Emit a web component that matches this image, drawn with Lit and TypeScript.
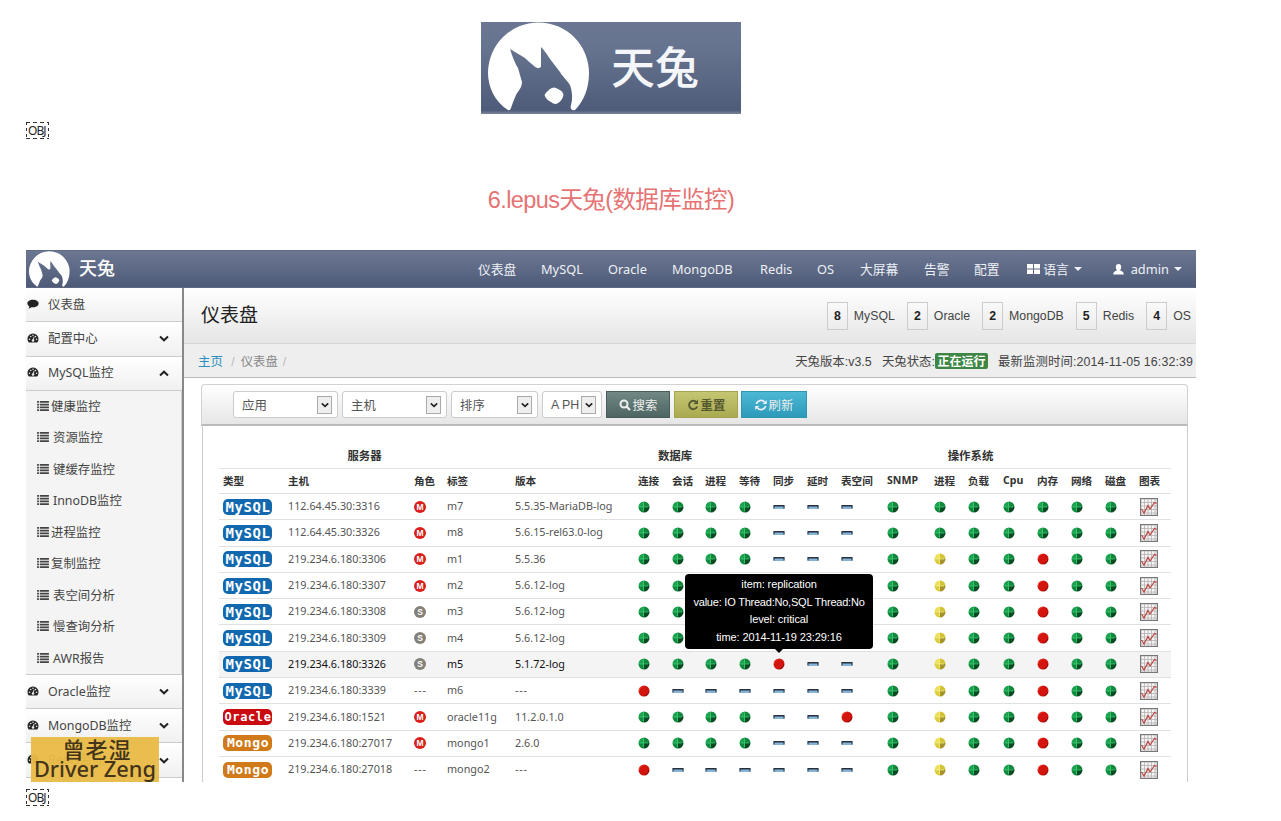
import { LitElement, html, css, svg } from "lit";
import { customElement } from "lit/decorators.js";

const rabbit = html`<svg class="rabbit" viewBox="0 0 116 92">
  <path fill="#fff" d="M27 88C14 80 7 65 7 51A50.5 50.5 0 0 1 108 51C108 66 103 79 94 88C90 89 89 86 90 83C92 76 91 69 89 63C86 58 81 54 79 50L69 37Q64 29 60 25L60 45Q56 48 52 43Q48 40 44 36L29 27Q33 40 37 46L41 60C41 66 37 69 35 73C33 78 32 80 30 86Q29 89 27 88Z"/>
  <path fill="#fff" d="M63.500 73Q65 70 69 67Q73 64 77 67Q82 69 82.500 73Q81 79 77 81Q74 83.500 70 80Q65 78 63.500 73Z"/>
</svg>`;

const gauge = html`<svg class="gauge" viewBox="0 0 14 12">
  <path fill="#262626" d="M1 10A6.6 6.6 0 1 1 13 10Q12.5 11.500 11.500 11.500H2.500Q1.500 11.500 1 10Z"/>
  <g fill="#eee"><circle cx="2.800" cy="7.500" r=".9"/><circle cx="4.300" cy="4.200" r=".9"/><circle cx="7" cy="2.800" r=".9"/><circle cx="10" cy="4.200" r=".9"/><circle cx="11.300" cy="7.500" r=".9"/></g>
  <path stroke="#eee" stroke-width="1.100" d="M7 9L8.300 4.500"/><circle cx="7" cy="9" r="1.500" fill="#eee"/>
</svg>`;

const comment = html`<svg class="gauge" viewBox="0 0 14 12"><path fill="#222" d="M7 1C11 1 13.800 3 13.800 5.500S11 10 7 10Q6 10 5 9.800Q3.500 11.300 1.600 11.400Q2.700 10.200 2.600 8.900Q.2 7.600 .2 5.500C.2 3 3 1 7 1Z"/></svg>`;

const listIcon = html`<svg class="list-icon" viewBox="0 0 13 11"><path fill="#444" d="M0 0h2v2H0zM3 0h10v2H3zM0 3h2v2H0zM3 3h10v2H3zM0 6h2v2H0zM3 6h10v2H3zM0 9h2v2H0zM3 9h10v2H3z"/></svg>`;

const chevron = (up: boolean) => html`<svg class="chev" viewBox="0 0 10 7"><path d=${up ? "M1 5.500L5 1.700L9 5.500" : "M1 1.500L5 5.300L9 1.500"} fill="none" stroke="#222" stroke-width="2"/></svg>`;

const chart = html`<svg class="chart" viewBox="0 0 18 18">
  <rect x=".6" y=".6" width="16.800" height="16.800" fill="#f6f3f3" stroke="#777" stroke-width="1.200"/>
  <path d="M4.500 1v16M8 1v16M11.500 1v16M15 1v16M1 4.500h16M1 8h16M1 11.500h16M1 15h16" stroke="#b5b0b2" stroke-width=".8"/>
  <path d="M1.500 11L4 15L8 7.500L10 11L14.500 4.500L16.500 5.500" fill="none" stroke="#b8453f" stroke-width="1.200"/>
</svg>`;

const palette: Record<string, string[]> = {
  g: ["#1da350", "#14873f", "#0f8a3c", "#0a4a22", "#43d67c"],
  y: ["#ece05a", "#d3c235", "#dccd3c", "#a3932a", "#f6ef8e"],
  r: ["#ea3a2c", "#d0140e", "#d0140e", "#9a0c08", ""],
};

function mark(kind: string) {
  if (kind === "-") {
    return html`<svg class="mark" viewBox="0 0 12 12"><path fill="#86b3d6" d="M.5 4h11v4H.5z"/><path fill="#26333f" d="M.5 4h11v1.400H.5zM.5 4h1v3.500h-1zM10.500 4h1v3.500h-1z"/></svg>`;
  }
  const [a, b, c, d, shine] = palette[kind];
  return html`<svg class="mark" viewBox="0 0 12 12">
    <path fill=${a} d="M6 6V.5A5.500 5.500 0 0 0 .5 6z"/>
    <path fill=${b} d="M6 6V.5A5.500 5.500 0 0 1 11.500 6z"/>
    <path fill=${c} d="M6 6V11.500A5.500 5.500 0 0 1 .5 6z"/>
    <path fill=${d} d="M6 6V11.500A5.500 5.500 0 0 0 11.500 6z"/>
    ${kind === "r" ? svg`<circle cx="6" cy="6" r="4.400" fill="#d4140f"/>` : svg`<path d="M5.500 1.500V10M1.500 6H10" stroke=${shine} stroke-width="1" opacity=".7"/>`}
  </svg>`;
}

type Row = [string, string, string, string, string, string];
const rows: Row[] = [
  ["MySQL", "112.64.45.30:3316", "M", "m7", "5.5.35-MariaDB-log", "gggg---ggggggg"],
  ["MySQL", "112.64.45.30:3326", "M", "m8", "5.6.15-rel63.0-log", "gggg---ggggggg"],
  ["MySQL", "219.234.6.180:3306", "M", "m1", "5.5.36", "gggg---gyggrgg"],
  ["MySQL", "219.234.6.180:3307", "M", "m2", "5.6.12-log", "gggg---gyggrgg"],
  ["MySQL", "219.234.6.180:3308", "S", "m3", "5.6.12-log", "gggg---gyggrgg"],
  ["MySQL", "219.234.6.180:3309", "S", "m4", "5.6.12-log", "gggg---gyggrgg"],
  ["MySQL", "219.234.6.180:3326", "S", "m5", "5.1.72-log", "ggggr--gyggrgg"],
  ["MySQL", "219.234.6.180:3339", "---", "m6", "---", "r------gyggrgg"],
  ["Oracle", "219.234.6.180:1521", "M", "oracle11g", "11.2.0.1.0", "gggg--rgyggrgg"],
  ["Mongo", "219.234.6.180:27017", "M", "mongo1", "2.6.0", "gggg---gyggrgg"],
  ["Mongo", "219.234.6.180:27018", "---", "mongo2", "---", "r------gyggrgg"],
];
const heads = ["类型", "主机", "角色", "标签", "版本", "连接", "会话", "进程", "等待", "同步", "延时", "表空间", "SNMP", "进程", "负载", "Cpu", "内存", "网络", "磁盘", "图表"];
const subs = ["健康监控", "资源监控", "键缓存监控", "InnoDB监控", "进程监控", "复制监控", "表空间分析", "慢查询分析", "AWR报告"];
const stats = [["8", "MySQL"], ["2", "Oracle"], ["2", "MongoDB"], ["5", "Redis"], ["4", "OS"]];

@customElement("app-root")
export class AppRoot extends LitElement {
  static styles = css`
    :host { display: block; width: 1281px; height: 821px; overflow: hidden; background: #fff; font-family: "Noto Sans", "Noto Sans CJK SC", sans-serif; color: #444; white-space: nowrap; }
    * { box-sizing: border-box; }
    svg { display: block; flex: none; }
    .page { padding: 22px 0 0 26px; width: 1196px; }
    .banner { width: 260px; height: 92px; margin-left: 455px; display: flex; background: linear-gradient(#6b7792, #66738f 30%, #4f5c79 96%, #7c869c); }
    .banner .rabbit { width: 116px; height: 92px; }
    .banner .name { font: 500 44px/86px "Noto Sans CJK SC", sans-serif; color: #f4f6fa; margin-left: 14px; height: 92px; }
    .obj { width: 23px; height: 17px; font: 12px/17px "Noto Sans", sans-serif; letter-spacing: -.9px; padding-left: 2px; color: #222; background: repeating-linear-gradient(90deg, #333 0 4px, transparent 4px 7px) 0 0/100% 1px no-repeat, repeating-linear-gradient(90deg, #333 0 4px, transparent 4px 7px) 0 100%/100% 1px no-repeat, repeating-linear-gradient(#333 0 3px, transparent 3px 6px) 0 0/1px 100% no-repeat, repeating-linear-gradient(#333 0 3px, transparent 3px 6px) 100% 0/1px 100% no-repeat; }
    .obj.first { margin-top: 8px; }
    .obj.last { margin-top: 7px; }
    h1 { margin: 44px 0 33px; height: 34px; font: 400 23.5px/34px "Liberation Sans", "Noto Sans CJK SC", sans-serif; letter-spacing: -.6px; color: #e57373; text-align: center; }
    .shot { width: 1170px; height: 532px; overflow: hidden; position: relative; }
    .top { height: 38px; display: flex; background: linear-gradient(#6c7792, #4e5b78); border-top: 1px solid #606c86; border-bottom: 1px solid #5e6881; color: #eef1f6; }
    .top .rabbit { width: 47px; height: 37px; }
    .top .name { font: 500 18px/33px "Noto Sans CJK SC", sans-serif; color: #fff; margin-left: 6px; width: 399px; }
    .nav { display: grid; grid-template-columns: 63px 67px 64px 88px 57px 43px 64px 50px 53px 86px 80px; font-size: 12.8px; line-height: 37px; }
    .nav span { display: flex; align-items: center; height: 36px; }
    .caret { border: 4.500px solid transparent; border-top-color: #eef1f6; border-bottom: 0; margin-left: 5px; }
    .cols { display: flex; height: 494px; }
    .side { width: 158px; border-right: 3px double #7f7f7f; border-right: 2px solid #888; box-shadow: inset -1px 0 #ccc; background: #f4f4f4; }
    .item { height: 34.3px; display: flex; align-items: center; padding: 0 13px 2px 1px; border-bottom: 1px solid #ccc; background: linear-gradient(#fff, #f0f0f0); font-size: 12.4px; }
    .item b { font-weight: 400; flex: 1; }
    .gauge { width: 12px; height: 10px; margin-right: 9px; }
    .chev { width: 10px; height: 7px; position: relative; top: 1px; }
    .subs { height: 284px; border-bottom: 1px solid #ccc; }
    .sub { height: 31.5px; display: flex; align-items: center; font-size: 12.4px; padding: 0 0 2px 11px; gap: 4px; }
    .sub.tight { gap: 2px; }
    .list-icon { width: 12px; height: 10px; }
    .main { flex: 1; background: #fff; }
    .title { height: 56px; display: flex; align-items: center; justify-content: space-between; padding: 0 5px 0 17px; background: linear-gradient(#fff, #e5e5e5); border-bottom: 1px solid #d6d6d6; font-size: 19px; color: #222; }
    .title > span { position: relative; top: -2px; }
    .stats { display: flex; font: 12.3px "Liberation Sans", sans-serif; color: #444; gap: 12px; align-items: center; }
    .stat { display: flex; align-items: center; gap: 6px; }
    .stat b { width: 21px; height: 28px; border: 1px solid #ccc; line-height: 26px; text-align: center; color: #222; background: linear-gradient(#fafafa, #ebebeb); }
    .crumbs { height: 34px; display: flex; align-items: center; justify-content: space-between; background: #eee; border-bottom: 1.500px solid #bbb; padding: 0 3px 0 14px; font: 12.4px "Liberation Sans", "Noto Sans CJK SC", sans-serif; }
    .crumbs i { color: #bbb; margin: 0 6px 0 5px; font-style: normal; }
    .link { color: #2a8fbd; }
    .dim { color: #888; }
    .state { display: flex; align-items: center; }
    .ok { width: 53px; height: 16px; border-radius: 2px; background: #3d8644; color: #fff; text-align: center; font: 700 12px/16px "Noto Sans CJK SC", sans-serif; margin: 0 10px 0 0; }
    .date { letter-spacing: .12px; }
    .bar { margin: 6px 8px 0 17px; height: 42px; border: 1px solid #d2d2d2; border-bottom: 2px solid #bbb; border-radius: 4px 4px 0 0; background: linear-gradient(#fff, #e6e6e6); display: flex; align-items: flex-start; padding: 6px 0 0 31px; font-size: 12.4px; }
    .sel { height: 27px; border: 1px solid #ccc; border-radius: 3px; background: #fff; display: flex; align-items: center; justify-content: space-between; padding: 0 5px 0 8px; margin-right: 4px; color: #555; }
    .sel.ph { font-family: "Liberation Sans", sans-serif; }
    .sel i { width: 15px; height: 18px; border: 1px solid #aaa; background: #eee; display: grid; place-items: center; }
    .sel i svg { width: 8px; height: 6px; top: 0; }
    .w1 { width: 105px; } .w2 { width: 105px; } .w3 { width: 87px; } .w4 { width: 60px; }
    .btn { height: 27px; width: 64px; display: flex; align-items: center; justify-content: center; gap: 2px; border: 1px solid #475c5b; background: linear-gradient(#718884, #4d6563); color: #eee; margin-right: 4px; }
    .btn svg { width: 12px; height: 12px; }
    .btn.olive { border-color: #a3a352; background: linear-gradient(#c5c673, #a9aa50); color: #555930; font-weight: 700; margin-right: 3px; }
    .btn.cyan { width: 66px; border-color: #3295b0; background: linear-gradient(#4cb8d4, #2c9ab9); }
    .panel { margin: 0 8px 0 18px; border: 1px solid #ccc; border-top: 0; height: 400px; padding: 16px 16px 0; }
    .group { height: 27px; display: grid; grid-template-columns: 291px 330px 261px; font: 700 11.4px/26px "Noto Sans CJK SC", sans-serif; color: #333; border-bottom: 1px solid #e2e2e2; text-align: center; }
    .line { display: grid; grid-template-columns: 65px 126px 33px 68px 123px 34px 33px 34px 34px 34px 34px 46px 47px 34px 35px 34px 34px 34px 34px 1fr; padding-left: 4px; height: 26.3px; align-items: center; border-bottom: 1px solid #e0e0e0; font-size: 10.8px; color: #555; }
    .line.head { height: 25px; font: 700 10.6px "Noto Sans", "Noto Sans CJK SC", sans-serif; color: #333; padding-bottom: 2px; }
    .line.hot { background: #f4f4f4; color: #111; }
    .txt { position: relative; top: -1px; }
    .dash { letter-spacing: .8px; }
    .mark { width: 12px; height: 12px; }
    .line .chart { width: 18px; height: 18px; margin-left: 1px; }
    .role { width: 12px; height: 12px; border-radius: 6px; background: #d9201a; color: #fff; font: 700 8.500px/12px "Liberation Sans", sans-serif; text-align: center; }
    .role.S { background: #858078; }
    .type { width: 49px; height: 16px; border-radius: 5px; background: #1268ae; color: #fff; font: 700 14px/16px "DejaVu Sans Mono", monospace; text-align: center; letter-spacing: .6px; padding-left: 1px; }
    .type.Oracle { background: #ca0b10; font-size: 12px; }
    .type.Mongo { background: #d07a1a; font-size: 13px; }
    .tip { position: absolute; left: 659px; top: 324px; width: 188px; height: 75px; border-radius: 4px; background: #000; color: #fff; font: 11px/17.500px "Liberation Sans", sans-serif; letter-spacing: -.1px; text-align: center; padding-top: 2px; }
    .tip .tight { letter-spacing: -.22px; }
    .tip::after { content: ""; position: absolute; left: 90px; top: 75px; border: 4px solid transparent; border-top-color: #000; border-bottom: 0; }
    .mine { position: absolute; left: 5px; top: 487px; width: 128px; height: 45px; background: rgba(233, 187, 68, .95); color: #44351a; text-align: center; }
    .mine p { margin: 0; font: 500 22px/23px "Noto Sans CJK SC", sans-serif; letter-spacing: 1px; padding-left: 4px; }
    .mine p + p { font: 500 21.800px/18px "Noto Sans", sans-serif; letter-spacing: 0; padding: 0; }
  `;

  render() {
    const group = (name: string, up = false) => html`<div class="item">${gauge}<b>${name}</b>${chevron(up)}</div>`;
    const select = (name: string, cls: string) => html`<div class="sel ${cls}">${name}<i>${chevron(false)}</i></div>`;
    const dash = html`<span class="txt dash">---</span>`;
    return html`<div class="page">
      <div class="banner">${rabbit}<span class="name">天兔</span></div>
      <div class="obj first">OBJ</div>
      <h1>6.lepus天兔(数据库监控)</h1>
      <div class="shot">
        <div class="top">${rabbit}<span class="name">天兔</span>
          <div class="nav">
            <span>仪表盘</span><span>MySQL</span><span>Oracle</span><span>MongoDB</span><span>Redis</span><span>OS</span><span>大屏幕</span><span>告警</span><span>配置</span>
            <span><svg width="13" height="10" viewBox="0 0 13 10"><path fill="#fff" d="M0 0h6v4.500H0zM7 0h6v4.500H7zM0 5.500h6V10H0zM7 5.500h6V10H7z"/></svg>&nbsp;语言<i class="caret"></i></span>
            <span><svg width="11" height="11" viewBox="0 0 11 11"><path fill="#fff" d="M5.500 0Q8.200 0 8.200 3Q8 5.500 7 6.500Q10.800 7.300 10.800 10.500H.2Q.2 7.300 4 6.500Q3 5.500 2.800 3Q2.800 0 5.500 0Z"/></svg>&nbsp; admin<i class="caret"></i></span>
          </div>
        </div>
        <div class="cols">
          <div class="side">
            <div class="item">${comment}<b>仪表盘</b></div>
            ${group("配置中心")}${group("MySQL监控", true)}
            <div class="subs">${subs.map((s, i) => html`<div class="sub ${[0, 4, 5].includes(i) ? "tight" : ""}">${listIcon}${s}</div>`)}</div>
            ${group("Oracle监控")}${group("MongoDB监控")}${group("Redis监控")}
            <div class="item"></div>
          </div>
          <div class="main">
            <div class="title"><span>仪表盘</span><div class="stats">${stats.map(([n, l]) => html`<div class="stat"><b>${n}</b>${l}</div>`)}</div></div>
            <div class="crumbs"><div><span class="link">主页</span><i>&nbsp;/</i><span class="dim">仪表盘</span><i>/</i></div>
              <div class="state">天兔版本:v3.5&nbsp;&nbsp; 天兔状态:<span class="ok">正在运行</span><span class="date">最新监测时间:2014-11-05 16:32:39</span></div></div>
            <div class="bar">
              ${select("应用", "w1")}${select("主机", "w2")}${select("排序", "w3")}${select("A PH", "w4 ph")}
              <div class="btn"><svg viewBox="0 0 12 12"><circle cx="5" cy="5" r="3.500" fill="none" stroke="#eee" stroke-width="2"/><path d="M7.500 7.500L11 11" stroke="#eee" stroke-width="2.300"/></svg>搜索</div>
              <div class="btn olive"><svg viewBox="0 0 12 12"><path d="M9.500 3.300A4.200 4.200 0 1 0 10.200 7.500" fill="none" stroke="#555930" stroke-width="1.900"/><path fill="#555930" d="M11 .5V5H6.500z"/></svg>重置</div>
              <div class="btn cyan"><svg viewBox="0 0 12 12"><path d="M1.300 5A4.800 4.800 0 0 1 9.500 3M10.700 7A4.800 4.800 0 0 1 2.500 9" fill="none" stroke="#eef" stroke-width="1.700"/><path fill="#eef" d="M11.800 1V5H7.500zM.2 11V7H4.500z"/></svg>刷新</div>
            </div>
            <div class="panel">
              <div class="group"><span>服务器</span><span>数据库</span><span>操作系统</span></div>
              <div class="line head">${heads.map((h) => html`<span>${h}</span>`)}</div>
              ${rows.map(([type, host, role, label, version, marks], i) => html`<div class="line ${i === 6 ? "hot" : ""}">
                <div class="type ${type}">${type}</div><span class="txt">${host}</span>
                ${role === "---" ? dash : html`<div class="role ${role}">${role}</div>`}
                <span class="txt">${label}</span>${version === "---" ? dash : html`<span class="txt">${version}</span>`}
                ${[...marks].map(mark)}${chart}
              </div>`)}
            </div>
          </div>
        </div>
        <div class="tip">item: replication<br><span class="tight">value: IO Thread:No,SQL Thread:No</span><br>level: critical<br>time: 2014-11-19 23:29:16</div>
        <div class="mine"><p>曾老湿</p><p>Driver Zeng</p></div>
      </div>
      <div class="obj last">OBJ</div>
    </div>`;
  }
}
